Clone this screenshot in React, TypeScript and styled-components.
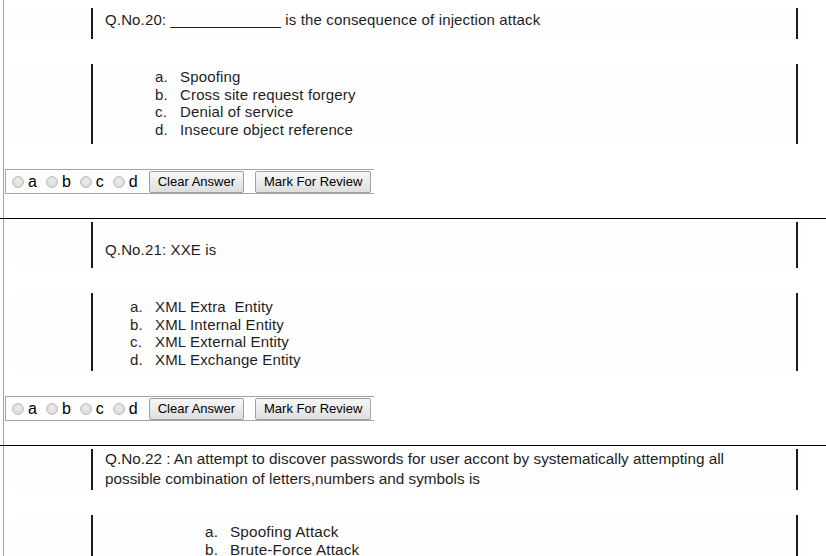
import React from 'react';
import styled, { createGlobalStyle } from 'styled-components';

const GlobalStyle = createGlobalStyle`
  html, body {
    margin: 0;
    padding: 0;
    background: #ffffff;
  }
  body {
    font-family: "Liberation Sans", Arial, sans-serif;
    color: #000;
    overflow: hidden;
    height: 556px;
  }
`;

type QuestionType = {
    no: number
    text: string
    options: string[]
    narrow?: boolean
    qPad: string
    qLine: number
    oPad: string
    markerLeft: number
}

const questions: QuestionType[] = [
    {
        no: 20,
        text: 'Q.No.20: _____________ is the consequence of injection attack',
        options: ['Spoofing', 'Cross site request forgery', 'Denial of service', 'Insecure object reference'],
        qPad: '3px 12px 11px',
        qLine: 17,
        oPad: '4px 0 6px',
        markerLeft: 62,
    },
    {
        no: 21,
        text: 'Q.No.21: XXE is',
        options: ['XML Extra\u00a0 Entity', 'XML Internal Entity', 'XML External Entity', 'XML Exchange Entity'],
        qPad: '19px 12px 10px',
        qLine: 17,
        oPad: '5px 0 3px',
        markerLeft: 37,
    },
    {
        no: 22,
        text: 'Q.No.22 : An attempt to discover passwords for user accont by systematically attempting all possible combination of letters,numbers and symbols is',
        options: ['Spoofing Attack', 'Brute-Force Attack'],
        narrow: true,
        qPad: '0 40px 1px 12px',
        qLine: 20,
        oPad: '8px 0 0',
        markerLeft: 112,
    },
]

const letters = ['a', 'b', 'c', 'd']

export default function App() {
    return (
        <>
            <GlobalStyle/>
            <Frame>
                {questions.map((q, i) => (
                    <React.Fragment key={q.no}>
                        {i > 0 && <Separator/>}
                        <Block first={i === 0}>
                            <Shot>
                                <QuestionBox pad={q.qPad} line={q.qLine} narrow={q.narrow}>
                                    {q.text}
                                </QuestionBox>
                            </Shot>
                            <Shot>
                                <OptionsBox pad={q.oPad} narrow={q.narrow}>
                                    {q.options.map((o, k) => (
                                        <OptionRow key={o} left={q.markerLeft}>
                                            <Marker>{letters[k]}.</Marker>
                                            <span>{o}</span>
                                        </OptionRow>
                                    ))}
                                </OptionsBox>
                            </Shot>
                            {q.no !== 22 && (
                                <AnswerBar>
                                    {letters.map(l => (
                                        <RadioLabel key={l}>
                                            <Radio type="radio" name={'q' + q.no}/>
                                            {l}
                                        </RadioLabel>
                                    ))}
                                    <Button>Clear Answer</Button>
                                    <Button>Mark For Review</Button>
                                </AnswerBar>
                            )}
                        </Block>
                    </React.Fragment>
                ))}
            </Frame>
        </>
    );
}

const Frame = styled.div`
  margin-left: 3px;
  border-left: 1px solid #a3a3a3;
  min-height: 556px;
`

const Separator = styled.div`
  height: 1px;
  background: #000;
  margin-left: -4px;
`

const Block = styled.div<{ first?: boolean }>`
  display: flex;
  flex-direction: column;
  gap: 25px;
  padding-top: ${p => p.first ? '8px' : '3px'};
  padding-bottom: 24px;
`

const Shot = styled.div`
  margin-left: 9px;
  width: 790px;
  padding-left: 78px;
  box-sizing: border-box;
  background: #fefefe;
`

const QuestionBox = styled.div<{ pad: string; line: number; narrow?: boolean }>`
  width: 707px;
  box-sizing: border-box;
  border-left: 2px solid #1c1c1c;
  border-right: 2px solid #1c1c1c;
  padding: ${p => p.pad};
  font-size: ${p => p.narrow ? '15.3px' : '15px'};
  letter-spacing: ${p => p.narrow ? '0' : '0.15px'};
  line-height: ${p => p.line}px;
  color: #1e1e1e;
`

const OptionsBox = styled.div<{ pad: string; narrow?: boolean }>`
  width: 707px;
  box-sizing: border-box;
  border-left: 2px solid #1c1c1c;
  border-right: 2px solid #1c1c1c;
  padding: ${p => p.pad};
  font-size: ${p => p.narrow ? '15.3px' : '15px'};
  letter-spacing: 0.15px;
  line-height: 17.5px;
  color: #1e1e1e;
`

const OptionRow = styled.div<{ left: number }>`
  display: flex;
  padding-left: ${p => p.left}px;
`

const Marker = styled.span`
  width: 25px;
  flex: none;
`

const AnswerBar = styled.div`
  display: flex;
  align-items: center;
  width: 362px;
  height: 23px;
  margin-left: 1px;
  padding-left: 6px;
  border: 1px solid #a5a5a5;
  border-right: none;
  font-size: 16px;
`

const RadioLabel = styled.label`
  display: flex;
  align-items: center;
  flex: none;
  gap: 4px;
  margin-right: 9px;
  line-height: 18px;
  color: #000;
`

const Radio = styled.input`
  appearance: none;
  margin: 0;
  width: 12px;
  height: 12px;
  border-radius: 50%;
  border: 1px solid #bdbdbd;
  background: radial-gradient(circle at 50% 40%, #ececec, #d4d4d4);
  box-sizing: border-box;
`

const Button = styled.button`
  flex: none;
  white-space: nowrap;
  height: 22px;
  padding: 0 8px;
  margin: 0 9px 0 2px;
  font-family: "Liberation Sans", Arial, sans-serif;
  font-size: 13px;
  color: #000;
  border: 1px solid #a0a0a0;
  border-radius: 2px;
  background: linear-gradient(#f7f7f7, #dedede);
`
